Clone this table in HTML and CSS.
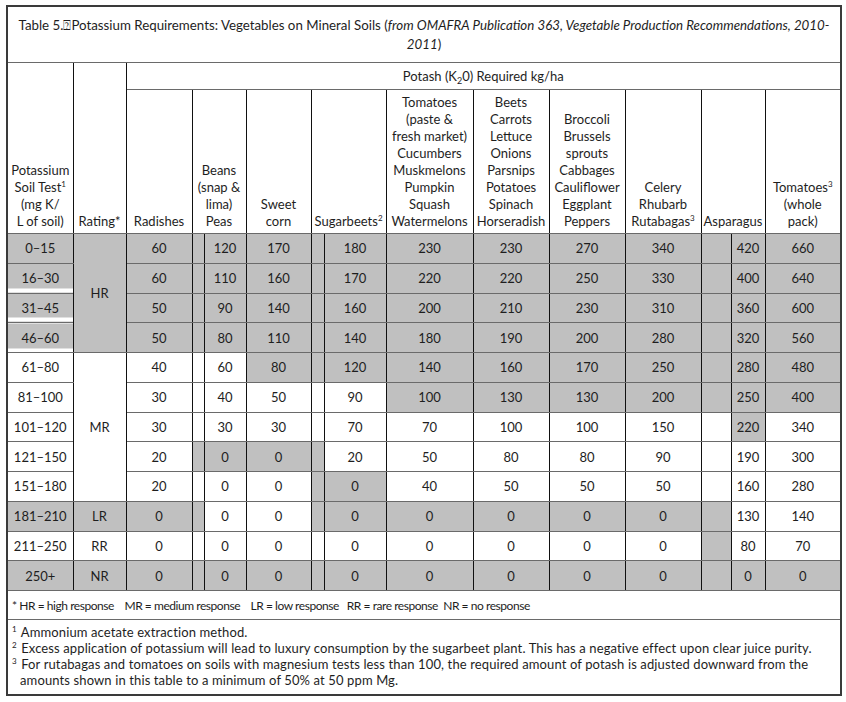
FILE: index.html
```html
<!DOCTYPE html>
<html>
<head>
<meta charset="utf-8">
<link rel="stylesheet" href="styles.css">
</head>
<body>
<div class="wrap">
<table class="k">
<colgroup>
<col class="c66"><col class="c53"><col class="c66"><col class="c12"><col class="c42"><col class="c65"><col class="c13"><col class="c62"><col class="c87"><col class="c76"><col class="c76"><col class="c76"><col class="c30"><col class="c34"><col class="c76">
</colgroup>
<tr class="r-title"><td colspan="15" class="title">Table 5.⍰Potassium Requirements: Vegetables on Mineral Soils (<i>from OMAFRA Publication 363, Vegetable Production Recommendations, 2010-<br>2011</i>)</td></tr>
<tr class="r-potash">
<td rowspan="2" class="hd">Potassium<br>Soil Test<sup>1</sup><br>(mg K/<br>L of soil)</td>
<td rowspan="2" class="hd">Rating*</td>
<td colspan="13" class="potash">Potash (K<sub>2</sub>0) Required kg/ha</td>
</tr>
<tr class="r-head">
<td class="hd">Radishes</td>
<td colspan="2" class="hd">Beans<br>(snap &amp;<br>lima)<br>Peas</td>
<td class="hd">Sweet<br>corn</td>
<td colspan="2" class="hd">Sugarbeets<sup>2</sup></td>
<td class="hd">Tomatoes<br>(paste &amp;<br>fresh market)<br>Cucumbers<br>Muskmelons<br>Pumpkin<br>Squash<br>Watermelons</td>
<td class="hd">Beets<br>Carrots<br>Lettuce<br>Onions<br>Parsnips<br>Potatoes<br>Spinach<br>Horseradish</td>
<td class="hd">Broccoli<br>Brussels<br>sprouts<br>Cabbages<br>Cauliflower<br>Eggplant<br>Peppers</td>
<td class="hd">Celery<br>Rhubarb<br>Rutabagas<sup>3</sup></td>
<td colspan="2" class="hd">Asparagus</td>
<td class="hd">Tomatoes<sup>3</sup><br>(whole<br>pack)</td>
</tr>
<tr class="d">
<td class="g">0–15</td><td rowspan="4" class="g">HR</td><td class="g">60</td><td class="g"></td><td class="g">120</td><td class="g">170</td><td class="g"></td><td class="g">180</td><td class="g">230</td><td class="g">230</td><td class="g">270</td><td class="g">340</td><td class="g"></td><td class="g">420</td><td class="g">660</td>
</tr>
<tr class="d">
<td class="gs">16–30</td><td class="g">60</td><td class="g"></td><td class="g">110</td><td class="g">160</td><td class="g"></td><td class="g">170</td><td class="g">220</td><td class="g">220</td><td class="g">250</td><td class="g">330</td><td class="g"></td><td class="g">400</td><td class="g">640</td>
</tr>
<tr class="d">
<td class="gs">31–45</td><td class="g">50</td><td class="g"></td><td class="g">90</td><td class="g">140</td><td class="g"></td><td class="g">160</td><td class="g">200</td><td class="g">210</td><td class="g">230</td><td class="g">310</td><td class="g"></td><td class="g">360</td><td class="g">600</td>
</tr>
<tr class="d">
<td class="gs">46–60</td><td class="g">50</td><td class="g"></td><td class="g">80</td><td class="g">110</td><td class="g"></td><td class="g">140</td><td class="g">180</td><td class="g">190</td><td class="g">200</td><td class="g">280</td><td class="g"></td><td class="g">320</td><td class="g">560</td>
</tr>
<tr class="d">
<td>61–80</td><td rowspan="5">MR</td><td>40</td><td></td><td>60</td><td class="g">80</td><td class="g"></td><td class="g">120</td><td class="g">140</td><td class="g">160</td><td class="g">170</td><td class="g">250</td><td class="g"></td><td class="g">280</td><td class="g">480</td>
</tr>
<tr class="d">
<td>81–100</td><td>30</td><td></td><td>40</td><td>50</td><td></td><td>90</td><td class="g">100</td><td class="g">130</td><td class="g">130</td><td class="g">200</td><td class="g"></td><td class="g">250</td><td class="g">400</td>
</tr>
<tr class="d">
<td>101–120</td><td>30</td><td></td><td>30</td><td>30</td><td></td><td>70</td><td>70</td><td>100</td><td>100</td><td>150</td><td></td><td class="g">220</td><td>340</td>
</tr>
<tr class="d">
<td>121–150</td><td>20</td><td class="g"></td><td class="g">0</td><td class="g">0</td><td class="g"></td><td>20</td><td>50</td><td>80</td><td>80</td><td>90</td><td></td><td>190</td><td>300</td>
</tr>
<tr class="d">
<td>151–180</td><td>20</td><td></td><td>0</td><td>0</td><td class="g"></td><td class="g">0</td><td>40</td><td>50</td><td>50</td><td>50</td><td></td><td>160</td><td>280</td>
</tr>
<tr class="d">
<td class="g">181–210</td><td class="g">LR</td><td class="g">0</td><td class="g"></td><td>0</td><td>0</td><td class="g"></td><td class="g">0</td><td class="g">0</td><td class="g">0</td><td class="g">0</td><td class="g">0</td><td class="g"></td><td>130</td><td>140</td>
</tr>
<tr class="d">
<td>211–250</td><td>RR</td><td>0</td><td></td><td>0</td><td>0</td><td></td><td>0</td><td>0</td><td>0</td><td>0</td><td>0</td><td class="g"></td><td>80</td><td>70</td>
</tr>
<tr class="d">
<td class="g">250+</td><td class="g">NR</td><td class="g">0</td><td class="g"></td><td class="g">0</td><td class="g">0</td><td class="g"></td><td class="g">0</td><td class="g">0</td><td class="g">0</td><td class="g">0</td><td class="g">0</td><td class="g"></td><td class="g">0</td><td class="g">0</td>
</tr>
<tr class="r-legend"><td colspan="15" class="legend">* HR = high response&nbsp;&nbsp;&nbsp; MR = medium response&nbsp;&nbsp;&nbsp; LR = low response&nbsp;&nbsp; RR = rare response&nbsp; NR = no response</td></tr>
<tr class="r-notes"><td colspan="15" class="notes">
<div class="note"><sup>1</sup> Ammonium acetate extraction method.</div>
<div class="note"><sup>2</sup> Excess application of potassium will lead to luxury consumption by the sugarbeet plant. This has a negative effect upon clear juice purity.</div>
<div class="note"><sup>3</sup> For rutabagas and tomatoes on soils with magnesium tests less than 100, the required amount of potash is adjusted downward from the</div>
<div class="note cont">amounts shown in this table to a minimum of 50% at 50 ppm Mg.</div>
</td></tr>
</table>
</div>
</body>
</html>
```

FILE: styles.css
```css
html, body {
  margin: 0;
  padding: 0;
  background: #fff;
}
body {
  font-family: Lato, "Liberation Sans", sans-serif;
  color: #1e1e1e;
}
.wrap {
  padding: 5px 0 0 6px;
}
.k {
  border-collapse: collapse;
  table-layout: fixed;
  width: 835px;
  border: 2px solid #3a3a3a;
  font-size: 13px;
}
.c66 { width: 66px; }
.c53 { width: 53px; }
.c12 { width: 12px; }
.c42 { width: 42px; }
.c65 { width: 65px; }
.c13 { width: 13px; }
.c62 { width: 62px; }
.c87 { width: 87px; }
.c76 { width: 76px; }
.c30 { width: 30px; }
.c34 { width: 34px; }

.k td {
  border-left: 1px solid #111;
  border-right: 1px solid #111;
  border-top: 1px solid #6a6a6a;
  border-bottom: 1px solid #6a6a6a;
  padding: 0;
  text-align: center;
  vertical-align: middle;
  white-space: nowrap;
  overflow: hidden;
}
.title {
  height: 46px;
  vertical-align: top !important;
  font-size: 13.3px;
  line-height: 19px;
  padding-top: 9px !important;
}
.r-potash td.potash {
  height: 26px;
  line-height: 17px;
}
.r-head td {
  height: 140px;
}
.hd {
  vertical-align: bottom !important;
  line-height: 17px;
  padding-bottom: 3px !important;
}
sup {
  font-size: 8px;
  line-height: 0;
  vertical-align: 5px;
}
sub {
  font-size: 9px;
  line-height: 0;
  vertical-align: -3px;
}
tr.d td {
  height: 28.75px;
}
.g {
  background: #c0c0c0;
}
.gs {
  background: linear-gradient(to bottom, #c0c0c0 calc(100% - 4px), #ffffff calc(100% - 4px));
}
.legend {
  text-align: left !important;
  height: 28px;
  font-size: 12px;
  padding-left: 4px !important;
  letter-spacing: -0.45px;
}
.notes {
  text-align: left !important;
  vertical-align: top !important;
  height: 70px;
  padding: 4px 0 0 4px !important;
  font-size: 13px;
  letter-spacing: 0.12px;
}
.note {
  line-height: 16px;
}
.note sup {
  vertical-align: 5px;
  margin-right: 1px;
}
.cont {
  padding-left: 8px;
}
```
